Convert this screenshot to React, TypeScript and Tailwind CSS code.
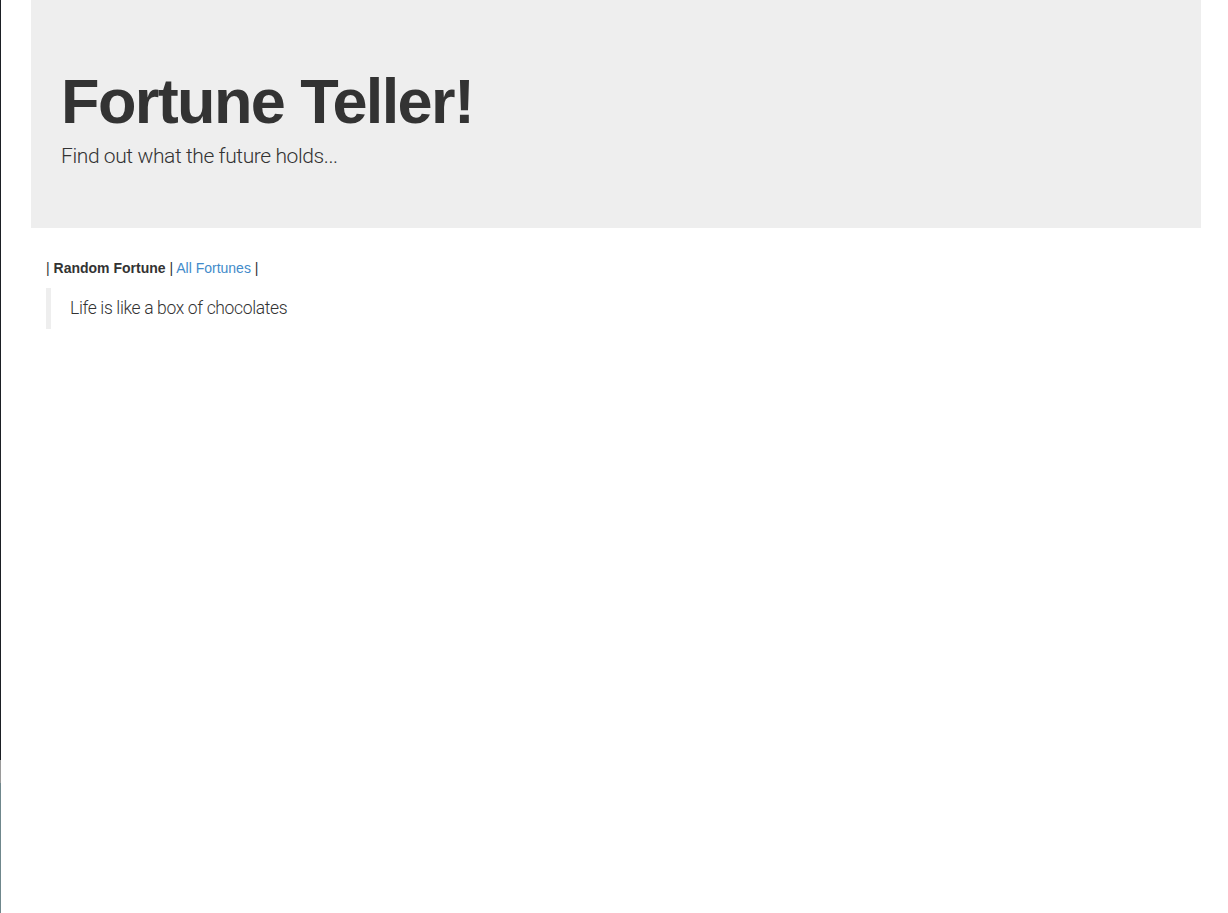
export default function App() {
  return (
    <div className="flex min-h-[913px] bg-white text-[#333]" style={{ fontFamily: '"Liberation Sans", Arial, sans-serif' }}>
      {/* thin window edge on the left */}
      <div className="flex w-[1px] flex-col">
        <div className="h-[760px] bg-[#1b1f24]" />
        <div className="h-[23px] bg-[#9a9a9a]" />
        <div className="flex-1 bg-[#6f878c]" />
      </div>

      <div className="ml-[30px] w-[1170px]">
        <div className="bg-[#eeeeee] px-[30px] pb-[56px] pt-[67px]">
          <h1 className="text-[63px] font-bold leading-[1.1] tracking-[-1.6px] text-[#333]">Fortune Teller!</h1>
          <p
            className="mt-[6px] text-[21px] font-light leading-[1.4] tracking-[-0.4px] text-[#333]"
            style={{ fontFamily: 'Roboto, "Liberation Sans", sans-serif' }}
          >
            Find out what the future holds...
          </p>
        </div>

        <div className="px-[15px] pt-[30px]">
          <div className="text-[14px] leading-[20px]">
            <span>| </span>
            <b className="font-bold">Random Fortune</b>
            <span> | </span>
            <a href="#" className="text-[#428bca]">All Fortunes</a>
            <span> |</span>
          </div>

          <blockquote
            className="mt-[10px] border-l-[5px] border-[#eeeeee] px-[19px] py-[10px] text-[17.5px] font-light leading-[1.2] tracking-[-0.35px]"
            style={{ fontFamily: 'Roboto, "Liberation Sans", sans-serif' }}
          >
            Life is like a box of chocolates
          </blockquote>
        </div>
      </div>
    </div>
  );
}
